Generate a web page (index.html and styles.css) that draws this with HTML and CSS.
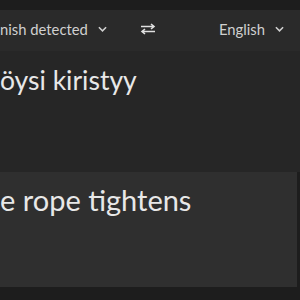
FILE: index.html
```html
<!DOCTYPE html>
<html>
<head>
    <meta name="viewport" content="width=device-width, initial-scale=1.0">
    <link rel="stylesheet" href="styles.css">
</head>
<body>
    <div class="app">
        <div class="lang-bar">
            <div class="lang lang-source">
                <span>nish detected</span>
                <svg class="chev" viewBox="0 0 10 6"><path d="M1 1l4 4 4-4"/></svg>
            </div>
            <div class="swap">
                <svg viewBox="0 0 16 12"><path d="M1 3.5h13M11 1l3 2.5-3 2.5M15 8.5H2M5 6l-3 2.5L5 11"/></svg>
            </div>
            <div class="lang lang-target">
                <span>English</span>
                <svg class="chev" viewBox="0 0 10 6"><path d="M1 1l4 4 4-4"/></svg>
            </div>
        </div>
        <div class="source">
            <p class="source-text">öysi kiristyy</p>
        </div>
        <div class="target">
            <p class="target-text">e rope tightens</p>
        </div>
    </div>
</body>
</html>
```

FILE: styles.css
```css
body {
    margin: 0;
    background: #1d1d1d;
    font-family: Lato, "Noto Sans", sans-serif;
    color: #e6e6e6;
    overflow: hidden;
}

.app {
    padding-top: 10px;
    width: 300px;
}

.lang-bar {
    height: 41px;
    background: #2a2a2a;
    display: flex;
    align-items: center;
    font-size: 14.8px;
    color: #d0d0d0;
    padding-bottom: 3px;
    box-sizing: border-box;
}

.lang {
    display: flex;
    align-items: center;
    gap: 10px;
}

.lang-source {
    width: 140px;
}

.swap {
    width: 79px;
    display: flex;
}

.swap svg {
    width: 16px;
    height: 12px;
    fill: none;
    stroke: #e0e0e0;
    stroke-width: 1.6;
}

.chev {
    width: 9px;
    height: 6px;
    fill: none;
    stroke: #d0d0d0;
    stroke-width: 1.7;
}

.source {
    background: #262626;
    height: 121px;
}

.source-text {
    margin: 0;
    padding-top: 13px;
    font-size: 26.5px;
    color: #e8e8e8;
}

.target {
    background: #2f2f2f;
    height: 115px;
    margin-right: 3px;
}

.target-text {
    margin: 0;
    padding-top: 10px;
    font-size: 29px;
    color: #e8e8e8;
}
```
